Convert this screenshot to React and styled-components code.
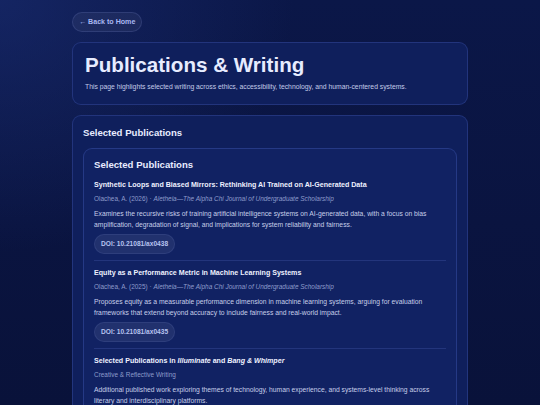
import React from "react";
import styled, { createGlobalStyle } from "styled-components";

const Global = createGlobalStyle`
  html, body { margin: 0; padding: 0; }
  *, *::before, *::after { box-sizing: border-box; }
  body {
    min-height: 100vh;
    font-family: "Liberation Sans", Arial, sans-serif;
    background:
      radial-gradient(ellipse 420px 360px at 0% 0%, rgba(28, 48, 120, 0.55), rgba(28, 48, 120, 0) 70%),
      linear-gradient(180deg, #0b1748 0%, #0a1440 55%, #09123a 100%);
    background-attachment: fixed;
    color: #e6ebff;
    -webkit-font-smoothing: antialiased;
  }
`;

const Page = styled.main`
  max-width: 396px;
  margin: 0 auto;
  padding: 12px 0 0;
  display: flex;
  flex-direction: column;
  align-items: stretch;
`;

const BackLink = styled.a`
  align-self: flex-start;
  display: inline-flex;
  align-items: center;
  height: 20px;
  padding: 0 6px;
  border-radius: 999px;
  background: rgba(255, 255, 255, 0.05);
  border: 1px solid rgba(160, 180, 255, 0.14);
  color: #a9b8f2;
  font-size: 7.1px;
  font-weight: 700;
  text-decoration: none;
  margin-bottom: 10px;
`;

const Card = styled.section`
  background: ${(p) => (p.$inner ? "#112263" : "#0f1f5c")};
  border: 1px solid rgba(110, 140, 255, ${(p) => (p.$inner ? 0.22 : 0.2)});
  border-radius: 9px;
`;

const HeaderCard = styled(Card)`
  padding: 10px 12px 12.5px;
  margin-bottom: 10px;
`;

const Title = styled.h1`
  margin: 0 0 5px;
  font-size: 20.6px;
  line-height: 24px;
  font-weight: 700;
  color: #e7ecff;
`;

const Lead = styled.p`
  margin: 0;
  font-size: 6.8px;
  line-height: 9px;
  color: #c3cbe8;
`;

const SectionCard = styled(Card)`
  padding: 11px 10px 0;
  border-bottom: none;
  border-bottom-left-radius: 0;
  border-bottom-right-radius: 0;
`;

const H2 = styled.h2`
  margin: 0 0 9px;
  font-size: 9.6px;
  line-height: 12px;
  font-weight: 700;
  color: #e8ecff;
`;

const InnerCard = styled(Card)`
  padding: 9.5px 10px 0;
  border-bottom: none;
  border-bottom-left-radius: 0;
  border-bottom-right-radius: 0;
`;

const H3 = styled.h3`
  margin: 0 0 2.5px;
  font-size: 9.6px;
  line-height: 13px;
  font-weight: 700;
  color: #e8ecff;
`;

const Item = styled.article`
  padding: 7.8px 0 6.5px;
  border-bottom: ${(p) => (p.$last ? "none" : "1px solid rgba(130, 155, 255, 0.16)")};
`;

const ItemTitle = styled.h4`
  margin: 0;
  font-size: 7.1px;
  line-height: 9px;
  font-weight: 700;
  color: #eef1ff;
  em { font-style: italic; }
`;

const Meta = styled.p`
  margin: 4px 0 0;
  font-size: 6.45px;
  line-height: 9px;
  color: #8e9ccb;
  em { font-style: italic; }
`;

const Desc = styled.p`
  margin: 4.5px 0 0;
  font-size: 6.75px;
  line-height: 11.3px;
  color: #c6cee9;
`;

const Doi = styled.span`
  display: inline-flex;
  align-items: center;
  height: 20px;
  margin-top: 3.5px;
  padding: 0 6px;
  border-radius: 999px;
  background: rgba(255, 255, 255, 0.07);
  border: 1px solid rgba(160, 180, 255, 0.1);
  color: #b7c3ee;
  font-size: 6.6px;
  font-weight: 700;
`;

const items = [
  {
    title: "Synthetic Loops and Biased Mirrors: Rethinking AI Trained on AI-Generated Data",
    meta: ["Olachea, A. (2026) · ", "Aletheia—The Alpha Chi Journal of Undergraduate Scholarship"],
    desc: "Examines the recursive risks of training artificial intelligence systems on AI-generated data, with a focus on bias amplification, degradation of signal, and implications for system reliability and fairness.",
    doi: "DOI: 10.21081/ax0438",
  },
  {
    title: "Equity as a Performance Metric in Machine Learning Systems",
    meta: ["Olachea, A. (2025) · ", "Aletheia—The Alpha Chi Journal of Undergraduate Scholarship"],
    desc: "Proposes equity as a measurable performance dimension in machine learning systems, arguing for evaluation frameworks that extend beyond accuracy to include fairness and real-world impact.",
    doi: "DOI: 10.21081/ax0435",
  },
];

export default function App() {
  return (
    <>
      <Global />
      <Page>
        <BackLink href="#">← Back to Home</BackLink>
        <HeaderCard>
          <Title>Publications &amp; Writing</Title>
          <Lead>
            This page highlights selected writing across ethics, accessibility, technology, and human-centered systems.
          </Lead>
        </HeaderCard>
        <SectionCard>
          <H2>Selected Publications</H2>
          <InnerCard $inner>
            <H3>Selected Publications</H3>
            {items.map((it) => (
              <Item key={it.doi}>
                <ItemTitle>{it.title}</ItemTitle>
                <Meta>
                  {it.meta[0]}
                  <em>{it.meta[1]}</em>
                </Meta>
                <Desc>{it.desc}</Desc>
                <Doi>{it.doi}</Doi>
              </Item>
            ))}
            <Item $last>
              <ItemTitle>
                Selected Publications in <em>Illuminate</em> and <em>Bang &amp; Whimper</em>
              </ItemTitle>
              <Meta>Creative &amp; Reflective Writing</Meta>
              <Desc>
                Additional published work exploring themes of technology, human experience, and systems-level thinking across literary and interdisciplinary platforms.
              </Desc>
            </Item>
          </InnerCard>
        </SectionCard>
      </Page>
    </>
  );
}
